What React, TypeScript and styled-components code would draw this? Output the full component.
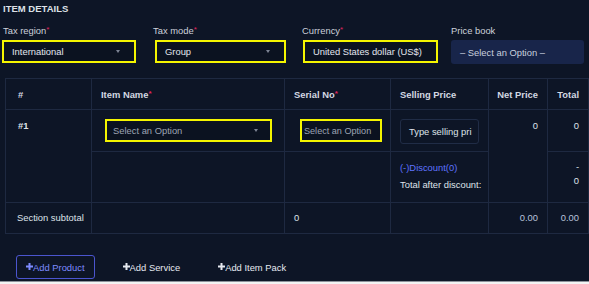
import React from 'react';
import styled, { createGlobalStyle } from 'styled-components';

const GlobalStyle = createGlobalStyle`
    html, body {
        margin: 0;
        padding: 0;
        background: #f3f3f3;
    }
    body {
        font-family: 'Liberation Sans', Arial, sans-serif;
        font-size: 9.4px;
    }
`;

function Plus() {
    return (
        <PlusIcon viewBox="0 0 7 7" width="7" height="7">
            <rect x="2.5" y="0" width="2" height="7" fill="currentColor" />
            <rect x="0" y="2.5" width="7" height="2" fill="currentColor" />
        </PlusIcon>
    );
}

function App() {
    return (
        <>
            <GlobalStyle />
            <Panel>
                <Title>Item Details</Title>
                <Fields>
                    <Field>
                        <Label>Tax region<Req>*</Req></Label>
                        <Select $hl $w={134}>
                            <SelectText>International</SelectText>
                            <Caret />
                        </Select>
                    </Field>
                    <Field>
                        <Label>Tax mode<Req>*</Req></Label>
                        <Select $hl $w={131} $ml={3}>
                            <SelectText>Group</SelectText>
                            <Caret />
                        </Select>
                    </Field>
                    <Field>
                        <Label>Currency<Req>*</Req></Label>
                        <Select $hl $w={135} $ml={2}>
                            <SelectText>United States dollar (US$)</SelectText>
                        </Select>
                    </Field>
                    <Field>
                        <Label>Price book</Label>
                        <PriceBook>– Select an Option –</PriceBook>
                    </Field>
                </Fields>

                <Table>
                    <colgroup>
                        <col style={{ width: 86 }} />
                        <col style={{ width: 193 }} />
                        <col style={{ width: 106 }} />
                        <col style={{ width: 98 }} />
                        <col style={{ width: 59 }} />
                        <col style={{ width: 41 }} />
                    </colgroup>
                    <thead>
                        <HeadRow>
                            <Th $pl={12}>#</Th>
                            <Th>Item Name<Req>*</Req></Th>
                            <Th>Serial No<Req>*</Req></Th>
                            <Th>Selling Price</Th>
                            <Th>Net Price</Th>
                            <Th>Total</Th>
                        </HeadRow>
                    </thead>
                    <tbody>
                        <ItemRow>
                            <Td rowSpan={2} $bold $pl={12} $pt={9}>#1</Td>
                            <Td $pt={9}>
                                <RowSelect $hl $w={167} $ml={4}>
                                    <Placeholder>Select an Option</Placeholder>
                                    <Caret />
                                </RowSelect>
                            </Td>
                            <Td $pt={9}>
                                <SerialSelect $hl $w={82} $ml={6}>
                                    <Placeholder>Select an Option</Placeholder>
                                </SerialSelect>
                            </Td>
                            <Td $pt={9}>
                                <PriceInput>Type selling pri</PriceInput>
                            </Td>
                            <Td rowSpan={2} $right $pt={9}>0</Td>
                            <Td $right $pt={9}>0</Td>
                        </ItemRow>
                        <DiscountRow>
                            <Td />
                            <Td />
                            <Td $pt={9}>
                                <Discount>(-)Discount(0)</Discount>
                                <AfterDiscount>Total after discount:</AfterDiscount>
                            </Td>
                            <Td $right $pt={8}>
                                <Stack>-</Stack>
                                <Stack>0</Stack>
                            </Td>
                        </DiscountRow>
                        <SubtotalRow>
                            <Td $pl={11} $mid>Section subtotal</Td>
                            <Td $mid />
                            <Td $mid>0</Td>
                            <Td $mid />
                            <Td $mid $right $muted>0.00</Td>
                            <Td $mid $right $muted>0.00</Td>
                        </SubtotalRow>
                    </tbody>
                </Table>

                <Actions>
                    <AddButton $primary><Plus />Add Product</AddButton>
                    <AddButton><Plus />Add Service</AddButton>
                    <AddButton><Plus />Add Item Pack</AddButton>
                </Actions>
            </Panel>
        </>
    );
}

const Panel = styled.div`
    width: 589px;
    height: 282px;
    box-sizing: border-box;
    padding: 3px 0 0 2px;
    background: #0d1526;
    border-bottom: 1px solid #8d929b;
    overflow: hidden;
    color: #dfe3ea;
`;

const Title = styled.div`
    padding-left: 1px;
    font-weight: 700;
    font-size: 9.5px;
    line-height: 12px;
    text-transform: uppercase;
    color: #dde1e8;
`;

const Fields = styled.div`
    display: grid;
    grid-template-columns: 150px 149px 149px 1fr;
    margin-top: 10px;
`;

const Field = styled.div`
    display: flex;
    flex-direction: column;
`;

const Label = styled.div`
    padding-left: 1px;
    line-height: 12px;
    color: #ccd1da;
`;

const Req = styled.span`
    color: #e0245e;
    font-size: 8px;
    vertical-align: top;
    line-height: 9px;
`;

const Select = styled.div<{ $hl?: boolean; $w: number; $ml?: number }>`
    position: relative;
    display: flex;
    align-items: center;
    box-sizing: border-box;
    width: ${p => p.$w}px;
    height: 23px;
    margin-top: 3px;
    margin-left: ${p => p.$ml || 0}px;
    padding: 0 8px;
    border: 2px solid ${p => (p.$hl ? '#f5f500' : '#1f2a42')};
    background: #0b1220;
    white-space: nowrap;
    overflow: hidden;
`;

const SelectText = styled.span`
    flex: 1;
    color: #e3e6ee;
`;

const Caret = styled.span`
    width: 0;
    height: 0;
    margin-right: 6px;
    border-left: 2.5px solid transparent;
    border-right: 2.5px solid transparent;
    border-top: 3px solid #7c8393;
`;

const PriceBook = styled.div`
    display: flex;
    align-items: center;
    box-sizing: border-box;
    width: 133px;
    height: 24px;
    margin-top: 3px;
    margin-left: 1px;
    padding-left: 9px;
    border-radius: 3px;
    background: #18254a;
    color: #c9d0df;
`;

const Table = styled.table`
    margin: 14px 0 0 3px;
    width: 583px;
    border-collapse: collapse;
    table-layout: fixed;
    border: 1px solid #1e2941;
`;

const HeadRow = styled.tr`
    height: 31px;
`;

const ItemRow = styled.tr`
    height: 42px;
`;

const DiscountRow = styled.tr`
    height: 51px;
`;

const SubtotalRow = styled.tr`
    height: 31px;
`;

const Th = styled.th<{ $pl?: number }>`
    padding: 0 0 0 ${p => p.$pl ?? 9}px;
    border: 1px solid #1e2941;
    text-align: left;
    font-weight: 700;
    color: #d3d8e2;
    white-space: nowrap;

    &:nth-child(5),
    &:nth-child(6) {
        text-align: right;
        padding: 0 9px 0 0;
    }
`;

const Td = styled.td<{ $pl?: number; $pt?: number; $right?: boolean; $bold?: boolean; $mid?: boolean; $muted?: boolean }>`
    box-sizing: border-box;
    padding: ${p => (p.$mid ? 0 : p.$pt ?? 0)}px ${p => (p.$right ? 9 : 0)}px 0 ${p => (p.$right ? 0 : p.$pl ?? 9)}px;
    border: 1px solid #1e2941;
    vertical-align: ${p => (p.$mid ? 'middle' : 'top')};
    text-align: ${p => (p.$right ? 'right' : 'left')};
    font-weight: ${p => (p.$bold ? 700 : 400)};
    line-height: 14px;
    color: ${p => (p.$muted ? '#b6c2dc' : '#dfe3ea')};
    white-space: nowrap;
`;

const RowSelect = styled(Select)`
    margin-top: 0;
    height: 23px;
    padding: 0 6px;
`;

const SerialSelect = styled(RowSelect)`
    padding: 0 2px;
    font-size: 9.1px;
`;

const Placeholder = styled.span`
    flex: 1;
    overflow: hidden;
    color: #9ea5b4;
`;

const PriceInput = styled.div`
    box-sizing: border-box;
    width: 79px;
    height: 25px;
    padding: 0 8px;
    line-height: 23px;
    border: 1px solid #202c46;
    border-radius: 3px;
    color: #dfe3ea;
    overflow: hidden;
    text-align: center;
`;

const Discount = styled.div`
    color: #5f73ff;
`;

const AfterDiscount = styled.div`
    margin-top: 3px;
    color: #dfe3ea;
`;

const Stack = styled.div`
    line-height: 14px;
`;

const Actions = styled.div`
    display: flex;
    gap: 18px;
    margin: 21px 0 0 14px;
`;

const AddButton = styled.div<{ $primary?: boolean }>`
    display: flex;
    align-items: center;
    box-sizing: border-box;
    height: 24px;
    padding: 0 9px;
    border: 1px solid ${p => (p.$primary ? '#4b55cf' : 'transparent')};
    border-radius: 3px;
    color: ${p => (p.$primary ? '#7e8bff' : '#e6e9f0')};
`;

const PlusIcon = styled.svg`
    display: block;
    margin-top: -1px;
`;

export default App;
